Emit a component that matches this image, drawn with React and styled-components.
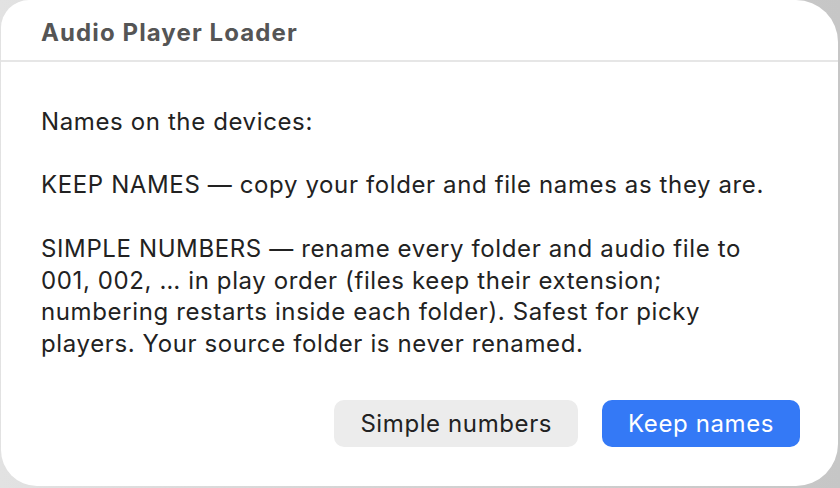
import styled, { createGlobalStyle } from 'styled-components';

const GlobalStyle = createGlobalStyle`
  html, body {
    margin: 0;
    padding: 0;
    height: 100%;
  }
  body {
    background: linear-gradient(90deg, #e2e2e2 0%, #d2d2d2 50%, #c6c6c6 100%);
    font-family: Inter, "Liberation Sans", sans-serif;
    overflow: hidden;
  }
  #root {
    height: 100%;
  }
`;

const Screen = styled.div`
  height: 488px;
  box-sizing: border-box;
  padding: 0 2px 2px 1px;
  display: flex;
`;

const Dialog = styled.div`
  flex: 1;
  display: flex;
  flex-direction: column;
  background: #fff;
  border-radius: 28px 42px 42px 36px;
  overflow: hidden;
`;

const Header = styled.div`
  height: 62px;
  box-sizing: border-box;
  padding: 5px 40px 0;
  display: flex;
  align-items: center;
  border-bottom: 2px solid #e6e6e6;
`;

const Title = styled.h1`
  margin: 0;
  font-size: 24px;
  font-weight: 700;
  color: #555;
  letter-spacing: 1.1px;
`;

const Body = styled.div`
  flex: 1;
  padding: 44px 40px 0;
`;

const Message = styled.p`
  margin: 0;
  font-size: 24px;
  line-height: 31.7px;
  letter-spacing: 0.62px;
  color: #222;
  white-space: pre-line;
`;

const Actions = styled.div`
  display: flex;
  justify-content: flex-end;
  gap: 24px;
  padding: 0 38px 39px;
`;

const Button = styled.button`
  height: 47px;
  padding: 0 26px;
  border: none;
  border-radius: 10px;
  font-family: inherit;
  font-size: 24px;
  letter-spacing: 0.6px;
  background: ${(p) => (p.$primary ? '#3479f6' : '#ececec')};
  color: ${(p) => (p.$primary ? '#fff' : '#222')};
  cursor: pointer;
`;

const text = `Names on the devices:

KEEP NAMES — copy your folder and file names as they are.

SIMPLE NUMBERS — rename every folder and audio file to
001, 002, … in play order (files keep their extension;
numbering restarts inside each folder). Safest for picky
players. Your source folder is never renamed.`;

export default function App() {
  return (
    <>
      <GlobalStyle />
      <Screen>
        <Dialog>
          <Header>
            <Title>Audio Player Loader</Title>
          </Header>
          <Body>
            <Message>{text}</Message>
          </Body>
          <Actions>
            <Button>Simple numbers</Button>
            <Button $primary>Keep names</Button>
          </Actions>
        </Dialog>
      </Screen>
    </>
  );
}
